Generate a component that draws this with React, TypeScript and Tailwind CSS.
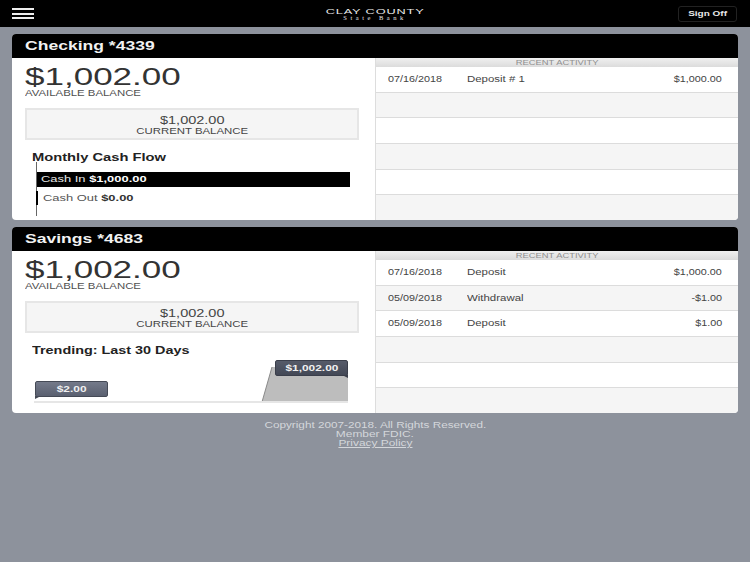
const sans = { fontFamily: '"Liberation Sans", Arial, sans-serif' };

// the reference is stretched sideways, so text gets a horizontal scale
function Stretch({ className, children }: { className: string; children: React.ReactNode }) {
  return <span className={`inline-block whitespace-nowrap ${className}`}>{children}</span>;
}

type Tx = { date: string; label: string; amount: string };

function Activity({ rows }: { rows: Tx[] }) {
  const filled = [...rows, ...Array(6 - rows.length).fill(null)] as (Tx | null)[];
  return (
    <div className="flex-1 flex flex-col">
      <div className="h-[9px] bg-gradient-to-b from-[#f0f0f0] to-[#dcdcdc] flex items-center justify-center">
        <Stretch className="text-[7.5px] leading-[9px] text-[#8f8f8f] scale-x-[1.25]">RECENT ACTIVITY</Stretch>
      </div>
      {filled.map((r, i) => (
        <div
          key={i}
          className={`h-[25.67px] flex-1 border-b border-[#dcdcdc] last:border-b-0 flex items-center pl-[12px] pr-[16px] text-[8.5px] text-[#444444] ${
            i % 2 ? 'bg-[#f5f5f5]' : 'bg-white'
          }`}
        >
          {r && (
            <>
              <div className="w-[79px] flex items-center">
                <Stretch className="origin-left scale-x-[1.27]">{r.date}</Stretch>
              </div>
              <div className="flex-1 flex items-center">
                <Stretch className="origin-left scale-x-[1.345]">{r.label}</Stretch>
              </div>
              <Stretch className="origin-right scale-x-[1.27]">{r.amount}</Stretch>
            </>
          )}
        </div>
      ))}
    </div>
  );
}

function Card({ title, rows, children }: { title: string; rows: Tx[]; children: React.ReactNode }) {
  return (
    <section className="h-[186px] rounded-[4px] overflow-hidden bg-white flex flex-col">
      <div className="h-[24px] bg-black flex items-center pl-[13px] pt-[1px] shrink-0">
        <Stretch className="origin-left scale-x-[1.3] font-bold text-[13.5px] text-[#f2f2f2]">{title}</Stretch>
      </div>
      <div className="flex-1 flex min-h-0">
        <div className="w-[364px] shrink-0 border-r border-[#dddddd] flex flex-col">
          <div className="pl-[13px] h-[26px] mt-[6px] flex items-center">
            <Stretch className="origin-left scale-x-[1.49] text-[23.5px] leading-[26px] text-[#333333]">$1,002.00</Stretch>
          </div>
          <div className="pl-[13px] h-[10px] mt-[-1px] flex items-center">
            <Stretch className="origin-left scale-x-[1.39] text-[8.2px] text-[#505050]">AVAILABLE BALANCE</Stretch>
          </div>
          <div className="ml-[13px] w-[334px] h-[32px] mt-[9px] pt-[3px] border-2 border-[#e6e6e6] bg-[#f5f5f5] flex flex-col items-center justify-center gap-[1px] text-[#444444]">
            <Stretch className="scale-x-[1.45] text-[10px] leading-[11px]">$1,002.00</Stretch>
            <Stretch className="scale-x-[1.39] text-[8.2px] leading-[10px]">CURRENT BALANCE</Stretch>
          </div>
          {children}
        </div>
        <Activity rows={rows} />
      </div>
    </section>
  );
}

function CashFlow() {
  return (
    <div className="pl-[20px] mt-[11px]">
      <div className="flex h-[12px] items-center">
        <Stretch className="origin-left scale-x-[1.4] font-bold text-[10.5px] leading-[12px] text-[#222222]">Monthly Cash Flow</Stretch>
      </div>
      <div className="ml-[4px] mt-[-1px] h-[54px] border-l border-[#666666] pt-[10px]">
        <div className="w-[313px] h-[15px] bg-black flex items-center pl-[4px] text-[#e8e8e8] text-[9.5px]">
          <Stretch className="origin-left scale-x-[1.36]">
            Cash In <b className="text-white">$1,000.00</b>
          </Stretch>
        </div>
        <div className="mt-[4px] h-[14px] border-l-2 border-black -ml-px flex items-center pl-[5px] text-[#555555] text-[9.5px]">
          <Stretch className="origin-left scale-x-[1.36]">
            Cash Out <b className="text-[#333333]">$0.00</b>
          </Stretch>
        </div>
      </div>
    </div>
  );
}

function Trending() {
  return (
    <div className="pl-[20px] mt-[11px]">
      <div className="flex h-[12px] items-center">
        <Stretch className="origin-left scale-x-[1.37] font-bold text-[10.5px] leading-[12px] text-[#222222]">Trending: Last 30 Days</Stretch>
      </div>
      <div className="relative h-[47px] -ml-[2px] w-[318px]">
        <svg width="318" height="47" viewBox="0 0 318 47" className="block">
          <polygon points="232,46 242,11 318,11 318,46" fill="#bdbdbd" />
          <line x1="232" y1="46" x2="242" y2="11" stroke="#8a8a8a" strokeWidth="1" />
          <rect x="4" y="45" width="314" height="2" fill="#e6e6e6" />
        </svg>
        <Bubble className="left-[5px] top-[25px] from-[#747a8a] to-[#5a6070] border-[#454a56]" tail="left" text="$2.00" />
        <Bubble className="left-[245px] top-[4px] from-[#565b69] to-[#434856] border-[#3a3e4a]" tail="right" text="$1,002.00" />
      </div>
    </div>
  );
}

function Bubble({ className, tail, text }: { className: string; tail: 'left' | 'right'; text: string }) {
  return (
    <div className={`absolute w-[73px] h-[16px] border bg-gradient-to-b rounded-[2px] flex items-center justify-center ${className}`}>
      <Stretch className="scale-x-[1.4] font-bold text-[8.5px] text-[#f0f0f0]">{text}</Stretch>
      <svg width="6" height="3" viewBox="0 0 6 3" className={`absolute top-full ${tail === 'left' ? '-left-px' : '-right-px'}`}>
        <polygon points={tail === 'left' ? '0,0 6,0 0,3' : '0,0 6,0 6,3'} fill={tail === 'left' ? '#454a56' : '#3a3e4a'} />
      </svg>
    </div>
  );
}

export default function App() {
  return (
    <div style={sans} className="w-[750px] h-[562px] bg-[#8d929c] overflow-hidden">
      <header className="h-[27px] bg-black flex items-center justify-between pl-[12px] pr-[13px] relative">
        <div className="w-[22px] flex flex-col gap-[2.5px]">
          <div className="h-[2px] bg-[#eeeeee]" />
          <div className="h-[2px] bg-[#eeeeee]" />
          <div className="h-[2px] bg-[#eeeeee]" />
        </div>
        <div className="absolute left-0 right-0 top-[9px] flex flex-col items-center text-[#e8e8e8]">
          <Stretch className="text-[7.5px] leading-[6px] tracking-[0.5px] scale-x-[1.7]">CLAY COUNTY</Stretch>
          <span style={{ fontFamily: '"Liberation Serif", serif' }} className="text-[6.5px] leading-[6px] tracking-[3.5px] whitespace-nowrap">
            State Bank
          </span>
        </div>
        <button className="w-[59px] h-[16px] rounded-[3px] border border-[#222222] flex items-center justify-center">
          <Stretch className="scale-x-[1.33] font-bold text-[7.5px] text-[#e8e8e8]">Sign Off</Stretch>
        </button>
      </header>
      <main className="px-[12px] pt-[7px] flex flex-col gap-[7px]">
        <Card title="Checking *4339" rows={[{ date: '07/16/2018', label: 'Deposit # 1', amount: '$1,000.00' }]}>
          <CashFlow />
        </Card>
        <Card
          title="Savings *4683"
          rows={[
            { date: '07/16/2018', label: 'Deposit', amount: '$1,000.00' },
            { date: '05/09/2018', label: 'Withdrawal', amount: '-$1.00' },
            { date: '05/09/2018', label: 'Deposit', amount: '$1.00' },
          ]}
        >
          <Trending />
        </Card>
      </main>
      <footer className="mt-[8px] flex flex-col items-center text-[#d4d7db] text-[8.5px] leading-[9px]">
        <Stretch className="scale-x-[1.38]">Copyright 2007-2018. All Rights Reserved.</Stretch>
        <Stretch className="scale-x-[1.4]">Member FDIC.</Stretch>
        <Stretch className="scale-x-[1.4] underline">Privacy Policy</Stretch>
      </footer>
    </div>
  );
}
